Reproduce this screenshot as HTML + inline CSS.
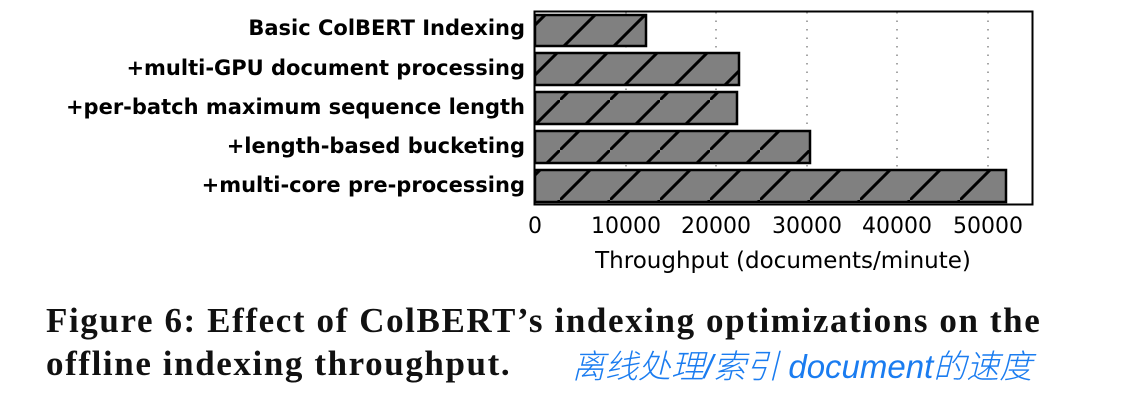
<!DOCTYPE html>
<html><head><meta charset="utf-8"><style>
html,body{margin:0;padding:0;background:#fff;width:1140px;height:400px;overflow:hidden}
.cap{position:absolute;left:46px;font-family:"Liberation Serif",serif;font-weight:bold;font-size:35px;letter-spacing:1.6px;color:#111;white-space:nowrap}
.hw{position:absolute;left:572px;top:340px;font-family:"Liberation Sans","Noto Sans CJK SC",sans-serif;font-size:33px;color:#1a7cf0;font-style:italic;white-space:nowrap;font-weight:300}
</style></head><body>
<svg width="1140" height="300" style="position:absolute;left:0;top:0" xmlns="http://www.w3.org/2000/svg">
<defs>
<pattern id="h" patternUnits="userSpaceOnUse" width="50" height="50" x="10" y="0">
<rect width="50" height="50" fill="#808080"/>
<line x1="-5" y1="55" x2="55" y2="-5" stroke="#000" stroke-width="3"/>
</pattern>
</defs>
<g stroke="#888" stroke-width="1.5" stroke-dasharray="1.5,7">
<line x1="716" y1="12" x2="716" y2="204"/>
<line x1="807" y1="12" x2="807" y2="204"/>
<line x1="897" y1="12" x2="897" y2="204"/>
<line x1="988" y1="12" x2="988" y2="204"/>
<line x1="626" y1="12" x2="626" y2="204"/>
</g>
<rect x="534.5" y="11.5" width="498" height="193" fill="none" stroke="#000" stroke-width="2"/>
<g stroke="#000" stroke-width="2.5">
<rect x="535" y="15" width="111" height="31" fill="url(#h)"/>
<rect x="535" y="53" width="204" height="32" fill="url(#h)"/>
<rect x="535" y="92" width="202" height="32" fill="url(#h)"/>
<rect x="535" y="131" width="275" height="32" fill="url(#h)"/>
<rect x="535" y="170" width="471" height="32" fill="url(#h)"/>
</g>
<g font-family="DejaVu Sans, sans-serif" font-weight="bold" font-size="21" text-anchor="end" fill="#000">
<text x="525" y="35">Basic ColBERT Indexing</text>
<text x="525" y="75">+multi-GPU document processing</text>
<text x="525" y="114">+per-batch maximum sequence length</text>
<text x="525" y="153">+length-based bucketing</text>
<text x="525" y="192">+multi-core pre-processing</text>
</g>
<g font-family="DejaVu Sans, sans-serif" font-size="22" text-anchor="middle" fill="#000">
<text x="535" y="233">0</text>
<text x="626" y="233">10000</text>
<text x="716" y="233">20000</text>
<text x="807" y="233">30000</text>
<text x="897" y="233">40000</text>
<text x="988" y="233">50000</text>
<text x="783" y="268" font-size="23">Throughput (documents/minute)</text>
</g>
</svg>
<div class="cap" style="top:301px">Figure 6: Effect of ColBERT’s indexing optimizations on the</div>
<div class="cap" style="top:344px">offline indexing throughput.</div>
<div class="hw">离线处理/索引 document的速度</div>
</body></html>
